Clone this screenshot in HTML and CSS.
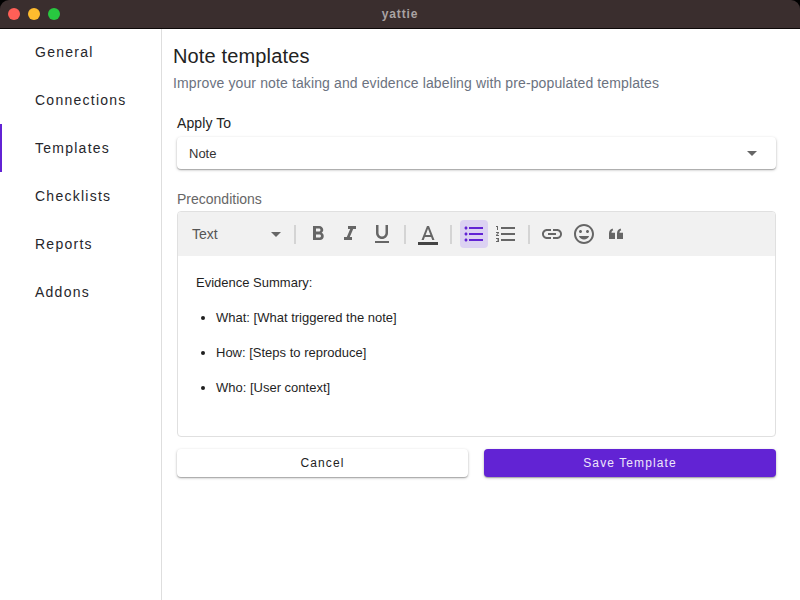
FILE: index.html
```html
<!DOCTYPE html>
<html>
<head>
    <title>yattie</title>
    <link rel="stylesheet" href="styles.css">
</head>
<body>
    <div class="titlebar">
        <div class="lights">
            <span class="light red"></span>
            <span class="light yellow"></span>
            <span class="light green"></span>
        </div>
        <div class="app-name">yattie</div>
    </div>

    <div class="main">
        <nav class="sidebar">
            <a class="nav-item">General</a>
            <a class="nav-item">Connections</a>
            <a class="nav-item active">Templates</a>
            <a class="nav-item">Checklists</a>
            <a class="nav-item">Reports</a>
            <a class="nav-item">Addons</a>
        </nav>

        <div class="content">
            <h1>Note templates</h1>
            <p class="subtitle">Improve your note taking and evidence labeling with pre-populated templates</p>

            <div class="form">
                <label class="apply-label">Apply To</label>
                <div class="select">
                    <span>Note</span>
                    <svg class="select-caret" viewBox="0 0 12 6"><path d="M0 0h12L6 6z"/></svg>
                </div>

                <label class="editor-label">Preconditions</label>
                <div class="editor">
                    <div class="toolbar">
                        <div class="style-picker">
                            <span>Text</span>
                            <svg class="picker-caret" viewBox="0 0 12 6"><path d="M0 0h12L6 6z"/></svg>
                        </div>
                        <span class="sep"></span>
                        <button class="tool"><svg viewBox="0 0 24 24"><path d="M15.6 10.79c.97-.67 1.65-1.77 1.65-2.79 0-2.26-1.75-4-4-4H7v14h7.04c2.09 0 3.71-1.7 3.71-3.79 0-1.52-.86-2.82-2.15-3.42zM10 6.5h3c.83 0 1.5.67 1.5 1.5s-.67 1.5-1.5 1.5h-3v-3zm3.5 9H10v-3h3.5c.83 0 1.5.67 1.5 1.5s-.67 1.5-1.5 1.5z"/></svg></button>
                        <button class="tool"><svg viewBox="0 0 24 24"><path d="M10 4v3h2.21l-3.42 8H6v3h8v-3h-2.21l3.42-8H18V4z"/></svg></button>
                        <button class="tool"><svg viewBox="0 0 24 24"><path d="M12 17c3.31 0 6-2.69 6-6V3h-2.500v8c0 1.930-1.570 3.500-3.500 3.500S8.500 12.930 8.500 11V3H6v8c0 3.310 2.690 6 6 6zm-7 2v2h14v-2H5z"/></svg></button>
                        <span class="sep"></span>
                        <button class="tool"><svg viewBox="0 0 24 24"><path d="M11 4L5.500 18h2.250l1.120-3h6.250l1.120 3h2.250L13 4h-2zm-1.380 9L12 6.670 14.380 13H9.620z"/><path class="color-bar" d="M2 20h20v3H2z"/></svg></button>
                        <span class="sep"></span>
                        <button class="tool selected"><svg viewBox="0 0 24 24"><path d="M4 10.500c-.830 0-1.500.670-1.500 1.500s.670 1.500 1.500 1.500 1.500-.670 1.500-1.500-.670-1.500-1.500-1.500zm0-6c-.830 0-1.500.670-1.500 1.500S3.170 7.500 4 7.500 5.500 6.830 5.500 6 4.830 4.500 4 4.500zm0 12c-.830 0-1.500.680-1.500 1.500s.680 1.500 1.500 1.500 1.500-.680 1.500-1.500-.670-1.500-1.500-1.500zM7 19h14v-2H7v2zm0-6h14v-2H7v2zm0-8v2h14V5H7z"/></svg></button>
                        <button class="tool"><svg viewBox="0 0 24 24"><path d="M2 17h2v.500H3v1h1v.500H2v1h3v-4H2v1zm1-9h1V4H2v1h1v3zm-1 3h1.800L2 13.100v.900h3v-1H3.200L5 10.900V10H2v1zm5-6v2h14V5H7zm0 14h14v-2H7v2zm0-6h14v-2H7v2z"/></svg></button>
                        <span class="sep"></span>
                        <button class="tool"><svg viewBox="0 0 24 24"><path d="M3.900 12c0-1.710 1.390-3.100 3.100-3.100h4V7H7c-2.760 0-5 2.240-5 5s2.240 5 5 5h4v-1.900H7c-1.710 0-3.100-1.390-3.100-3.100zM8 13h8v-2H8v2zm9-6h-4v1.900h4c1.710 0 3.100 1.390 3.100 3.100s-1.390 3.100-3.100 3.100h-4V17h4c2.760 0 5-2.240 5-5s-2.240-5-5-5z"/></svg></button>
                        <button class="tool"><svg viewBox="0 0 24 24"><path d="M11.990 2C6.470 2 2 6.480 2 12s4.470 10 9.990 10C17.520 22 22 17.520 22 12S17.520 2 11.990 2zM12 20c-4.420 0-8-3.580-8-8s3.580-8 8-8 8 3.580 8 8-3.580 8-8 8zm3.500-9c.830 0 1.500-.670 1.500-1.500S16.330 8 15.500 8 14 8.670 14 9.500s.670 1.500 1.500 1.500zm-7 0c.830 0 1.500-.670 1.500-1.500S9.330 8 8.500 8 7 8.670 7 9.500 7.670 11 8.500 11zm3.500 6.500c2.330 0 4.310-1.460 5.110-3.500H6.890c.800 2.040 2.780 3.500 5.110 3.500z"/></svg></button>
                        <button class="tool"><svg viewBox="0 0 24 24"><path d="M11 17H5v-5.500C5 9 6.200 7.300 8.600 6.600l.600 1.700C8 8.800 7.500 9.600 7.500 10.800H11zM19 17h-6v-5.500c0-2.500 1.200-4.200 3.600-4.900l.600 1.700c-1.200.500-1.700 1.300-1.700 2.500H19z"/></svg></button>
                    </div>
                    <div class="editor-body">
                        <p>Evidence Summary:</p>
                        <ul>
                            <li>What: [What triggered the note]</li>
                            <li>How: [Steps to reproduce]</li>
                            <li>Who: [User context]</li>
                        </ul>
                    </div>
                </div>

                <div class="actions">
                    <button class="btn">Cancel</button>
                    <button class="btn primary">Save Template</button>
                </div>
            </div>
        </div>
    </div>
</body>
</html>
```

FILE: styles.css
```css
* { box-sizing: border-box; }
html, body { height: 100%; }
body { margin: 0; background: #000; font-family: "Liberation Sans", Arial, sans-serif; color: #1f1f1f; display: flex; flex-direction: column; overflow: hidden; }

.titlebar { height: 28px; flex: none; background: #3a2e2e; box-shadow: 0 1px 0 #0c0808; border-radius: 9px 9px 0 0; display: flex; align-items: center; position: relative; padding-left: 8px; }
.lights { display: flex; gap: 8px; }
.light { width: 12px; height: 12px; border-radius: 50%; }
.red { background: #ff5f57; }
.yellow { background: #febc2e; }
.green { background: #28c840; }
.app-name { position: absolute; left: 0; right: 0; text-align: center; font-size: 12px; font-weight: bold; letter-spacing: 0.9px; color: #a9a3a3; }

.main { flex: 1; display: flex; background: #fff; }

.sidebar { width: 162px; flex: none; border-right: 1px solid #dedede; }
.nav-item { display: flex; align-items: center; height: 48px; padding-left: 35px; font-size: 14px; letter-spacing: 1.25px; color: #26262b; }
.nav-item.active { box-shadow: inset 2px 0 0 #6223d4; }

.content { flex: 1; padding: 16px 24px 0 11px; }
h1 { margin: 0; font-size: 20px; line-height: 24px; font-weight: normal; letter-spacing: 0.15px; color: #222; }
.subtitle { margin: 5px 0 0; font-size: 14px; line-height: 20px; letter-spacing: 0.12px; color: #6b7280; }

.form { padding-left: 4px; }
.apply-label { display: block; margin-top: 20px; font-size: 14px; line-height: 20px; letter-spacing: 0.1px; color: #222; }
.select { display: flex; align-items: center; justify-content: space-between; height: 32px; margin-top: 4px; padding: 0 19px 0 12px; background: #fff; border-radius: 4px; font-size: 13px; color: #333; box-shadow: 0 1px 3px rgba(0,0,0,0.25), 0 1px 1px rgba(0,0,0,0.2); }
.select-caret { width: 10px; height: 5px; fill: #666; }

.editor-label { display: block; margin-top: 20px; font-size: 14px; line-height: 20px; color: #666; }
.editor { height: 226px; margin-top: 2px; border: 1px solid #e0e0e0; border-radius: 4px; overflow: hidden; }
.toolbar { display: flex; align-items: center; height: 44px; background: #f1f1f1; padding-left: 14px; }
.style-picker { display: flex; align-items: center; justify-content: space-between; width: 96px; padding-right: 7px; font-size: 14px; color: #555; }
.picker-caret { width: 10px; height: 5px; fill: #666; }
.sep { width: 2px; height: 19px; margin: 0 6px; background: #d4d4d4; }
.tool { width: 28px; height: 28px; padding: 2px; margin: 0 2px; border: none; border-radius: 4px; background: none; display: flex; align-items: center; justify-content: center; }
.tool svg { width: 24px; height: 24px; flex: none; fill: #666; }
.tool .color-bar { fill: #444; }
.tool.selected { background: #dcd2f2; }
.tool.selected svg { fill: #6223d4; }

.editor-body { padding: 17px 18px; font-size: 13px; line-height: 20px; color: #1f1f1f; }
.editor-body p { margin: 0 0 15px; }
.editor-body ul { margin: 0; padding-left: 20px; }
.editor-body li { margin-bottom: 15px; }

.actions { display: grid; grid-template-columns: 291px 292px; gap: 16px; margin-top: 12px; }
.btn { height: 28px; border: none; border-radius: 4px; background: #fff; font-family: inherit; font-size: 12px; letter-spacing: 1.1px; color: #222; box-shadow: 0 1px 3px rgba(0,0,0,0.25), 0 1px 1px rgba(0,0,0,0.2); }
.btn.primary { background: #6223d4; color: #eee6fb; }
```
